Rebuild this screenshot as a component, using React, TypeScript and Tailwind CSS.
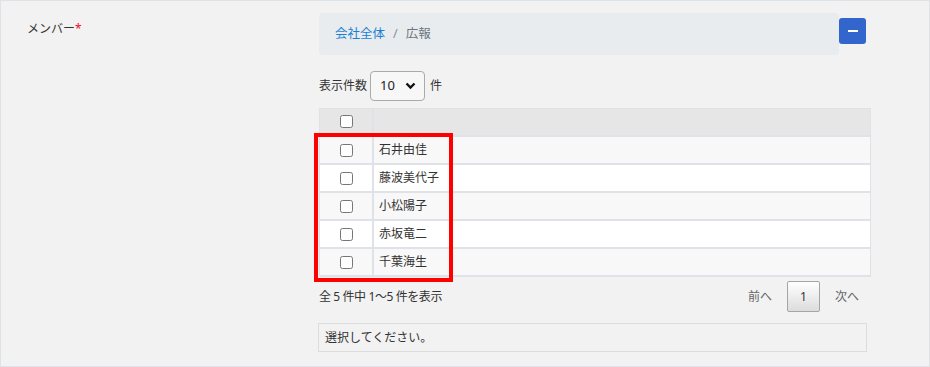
import { useState } from 'react'

const members = ['石井由佳', '藤波美代子', '小松陽子', '赤坂竜二', '千葉海生']

function Check({ checked, onChange }: { checked: boolean; onChange: () => void }) {
  return <input type="checkbox" checked={checked} onChange={onChange} className="m-0 h-[13px] w-[13px]" />
}

export default function App() {
  const [selected, setSelected] = useState<string[]>([])
  const allChecked = selected.length === members.length

  const toggle = (name: string) =>
    setSelected(prev => (prev.includes(name) ? prev.filter(n => n !== name) : [...prev, name]))

  return (
    <div
      className="flex h-[367px] w-[930px] border border-[#dfe2e6] bg-[#f2f2f2] text-[12px] text-[#333]"
      style={{ fontFamily: '"Noto Sans", "Noto Sans CJK JP", sans-serif' }}
    >
      {/* Label */}
      <div className="w-[318px] shrink-0 pl-[26px] pt-[19px]">
        <span className="text-[12px] text-[#333]">メンバー</span>
        <span className="text-[12px] text-[#e8101a]">*</span>
      </div>

      {/* Field */}
      <div className="flex w-[552px] flex-col pt-[12px]">
        <div className="flex items-start">
          <div className="flex h-[42px] w-[520px] items-center rounded-[4px] bg-[#e8ecef] px-[16px] text-[12.5px]">
            <span className="text-[#1a7fd4]">会社全体</span>
            <span className="mx-[8px] text-[#8a9097]">/</span>
            <span className="text-[#6c757d]">広報</span>
          </div>
          <button className="mt-[5px] flex h-[26px] w-[27px] items-center justify-center rounded-[3px] bg-[#3366cc]">
            <span className="block h-[2px] w-[10px] bg-white" />
          </button>
        </div>

        {/* Page size */}
        <div className="mt-[16px] flex items-center text-[12px]">
          <span>表示件数</span>
          <div className="ml-[3px] flex h-[30px] w-[55px] items-center justify-between rounded-[4px] border border-[#aaa] bg-[#f7f7f7] pl-[9px] pr-[8px]">
            <span className="text-[13px] text-[#222]">10</span>
            <svg width="11" height="8" viewBox="0 0 11 8">
              <path d="M1.5 1.5 L5.5 5.5 L9.5 1.5" fill="none" stroke="#111" strokeWidth="2.4" />
            </svg>
          </div>
          <span className="ml-[5px]">件</span>
        </div>

        {/* Table */}
        <div className="relative mt-[7px] border-t border-r border-l border-[#dfe2e6]">
          <div className="flex h-[28px] border-b-2 border-[#dfe2e6] bg-[#e6e6e6]">
            <div className="flex w-[54px] items-center justify-center border-r-2 border-[#dfe2e6] pb-[2px]">
              <Check checked={allChecked} onChange={() => setSelected(allChecked ? [] : members)} />
            </div>
            <div className="flex-1" />
          </div>
          {members.map((name, i) => (
            <div
              key={name}
              className={
                'flex h-[28px] border-b-2 border-[#dfe2e6] ' + (i % 2 === 0 ? 'bg-[#f8f8f8]' : 'bg-white')
              }
            >
              <div className="flex w-[54px] items-center justify-center border-r-2 border-[#dfe2e6]">
                <Check checked={selected.includes(name)} onChange={() => toggle(name)} />
              </div>
              <div className="flex flex-1 items-center pl-[5px] text-[12px] text-[#333]">{name}</div>
            </div>
          ))}

          {/* highlight annotation */}
          <div className="pointer-events-none absolute left-[-6px] top-[24px] h-[149px] w-[139px] border-4 border-[#ff0000]" />
        </div>

        {/* Info + pager */}
        <div className="mt-[4px] flex h-[31px] items-center justify-between pr-[12px]">
          <span className="text-[12px] tracking-[-0.4px] text-[#333]">全 5 件中 1〜5 件を表示</span>
          <div className="flex items-center gap-[15px] text-[12px] text-[#666]">
            <span>前へ</span>
            <span className="flex h-[31px] w-[33px] items-center justify-center rounded-[2px] border border-[#a5a5a5] bg-gradient-to-b from-white to-[#dcdcdc] text-[#333]">
              1
            </span>
            <span>次へ</span>
          </div>
        </div>

        {/* Selected */}
        <div className="ml-[-1px] mt-[11px] flex h-[29px] w-[549px] items-center border border-[#dcdcdc] px-[6px] text-[12px] text-[#333]">
          選択してください。
        </div>
      </div>
    </div>
  )
}
